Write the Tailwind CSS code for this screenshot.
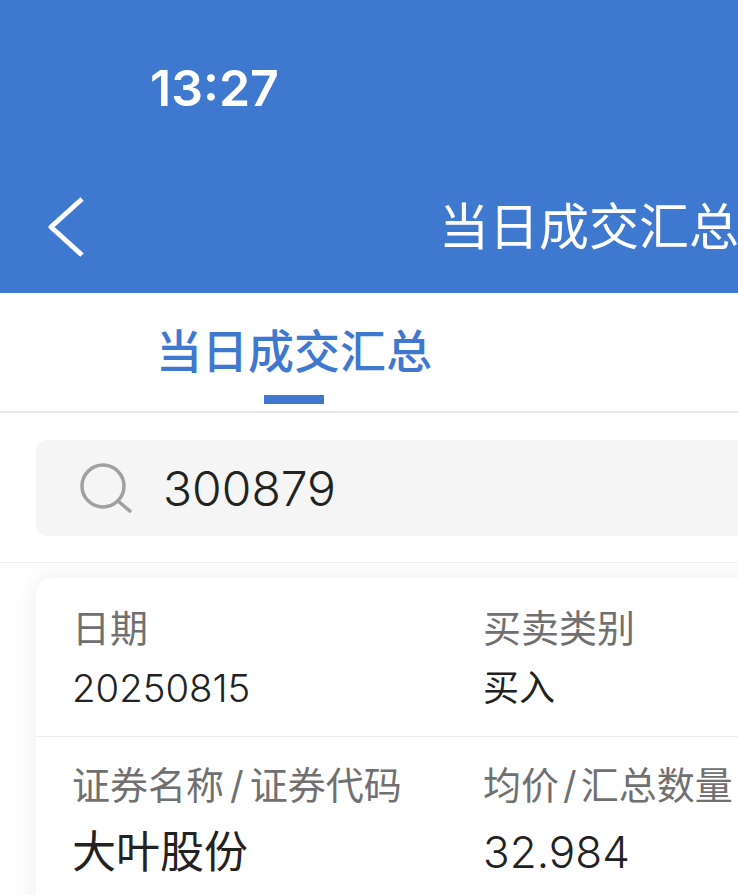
<!DOCTYPE html>
<html lang="zh-CN">
<head>
    <meta charset="UTF-8">
    <meta name="viewport" content="width=device-width, initial-scale=1.0">
    <title>当日成交汇总</title>
    <script src="https://cdn.jsdelivr.net/npm/@tailwindcss/browser@4"></script>
</head>
<body class="bg-white w-[738px] h-[895px] overflow-hidden font-['Inter','Noto_Sans_CJK_SC',sans-serif]">
    <!-- header -->
    <header class="bg-[#3f78cf] h-[293px] w-[738px] text-white overflow-hidden">
        <div class="h-[176px] pl-[150px] pt-[56px]">
            <span class="block text-[50px] leading-[64px] font-semibold">13:27</span>
        </div>
        <div class="flex items-center h-[102px] whitespace-nowrap">
            <svg class="ml-[46px] w-[40px] h-[62px] shrink-0" viewBox="0 0 40 62" fill="none" stroke="white" stroke-width="5">
                <path d="M36 3 L5 31 L36 59" stroke-linejoin="round"/>
            </svg>
            <span class="ml-[353px] text-[50px] leading-[60px]">当日成交汇总</span>
        </div>
    </header>

    <!-- tab -->
    <div class="h-[120px] border-b-2 border-[#e8e8e8] relative pl-[156px] pt-[28px]">
        <span class="block text-[46px] leading-[60px] font-medium text-[#3f78cf] whitespace-nowrap">当日成交汇总</span>
        <div class="absolute left-[264px] top-[102px] w-[60px] h-[9px] bg-[#3f78cf]"></div>
    </div>

    <!-- search -->
    <div class="h-[150px] border-b border-[#ececec] pt-[27px] pl-[36px]">
        <div class="w-[760px] h-[96px] bg-[#f5f5f5] rounded-xl flex items-center">
            <svg class="ml-[44px] w-[54px] h-[50px]" viewBox="0 0 54 50" fill="none" stroke="#a0a0a0" stroke-width="3.5">
                <circle cx="23" cy="23" r="21"/>
                <path d="M38 38 L51 49"/>
            </svg>
            <span class="ml-[29px] mt-[2px] text-[48px] leading-[60px] font-light text-[#222]">300879</span>
        </div>
    </div>

    <!-- card -->
    <div class="ml-[36px] mt-[15px] w-[760px] h-[400px] bg-white rounded-t-2xl shadow-[0_0_24px_rgba(0,0,0,0.08)]">
        <div class="h-[159px] border-b border-[#ececec] grid grid-cols-[411px_1fr] pl-[36px] pt-[26px]">
            <div>
                <p class="text-[38px] leading-[48px] text-[#707070]">日期</p>
                <p class="mt-[12px] text-[38.3px] leading-[48px] font-light text-[#222]">20250815</p>
            </div>
            <div>
                <p class="text-[38px] leading-[48px] text-[#707070] whitespace-nowrap">买卖类别</p>
                <p class="mt-[12px] text-[36px] leading-[48px] text-[#222]">买入</p>
            </div>
        </div>
        <div class="grid grid-cols-[411px_1fr] pl-[36px] pt-[24px]">
            <div>
                <p class="text-[38px] leading-[48px] text-[#707070] whitespace-nowrap">证券名称<span class="mx-[6px]">/</span>证券代码</p>
                <p class="mt-[16px] text-[44px] leading-[54px] text-[#222]">大叶股份</p>
            </div>
            <div>
                <p class="text-[38px] leading-[48px] text-[#707070] whitespace-nowrap">均价<span class="mx-[4px]">/</span>汇总数量</p>
                <p class="mt-[16px] text-[44px] leading-[54px] font-light text-[#222]">32.984</p>
            </div>
        </div>
    </div>
</body>
</html>
